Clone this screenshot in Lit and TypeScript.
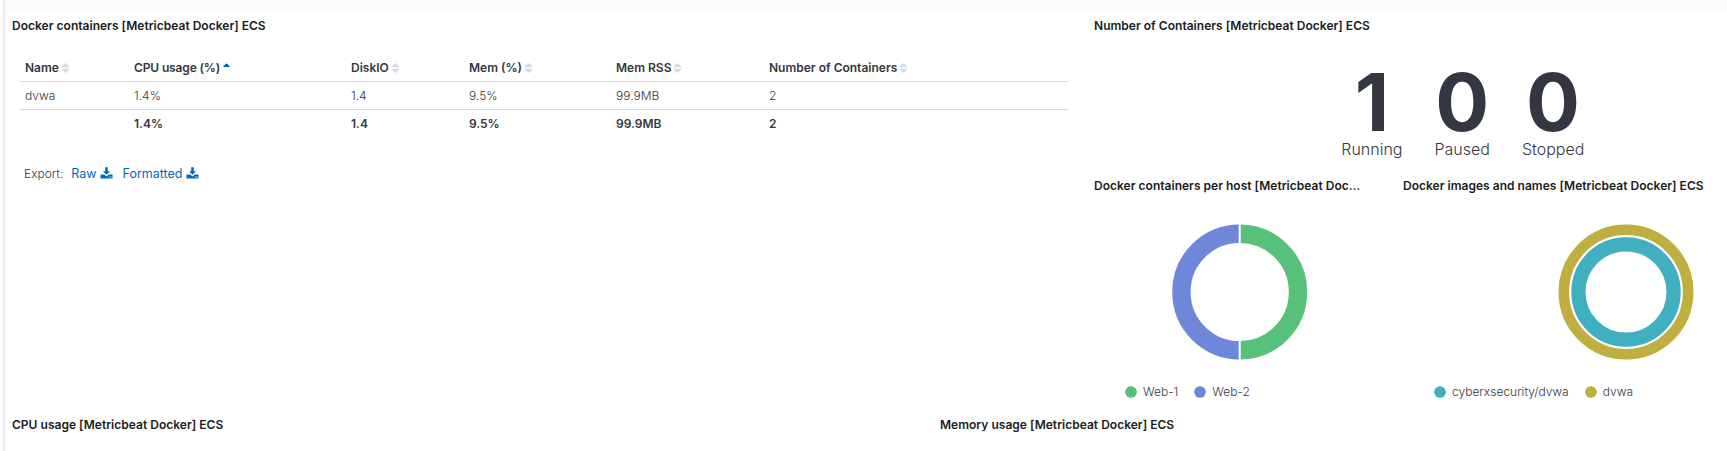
import { LitElement, html, svg, css } from "lit";
import { customElement } from "lit/decorators.js";

interface Column { label: string; value: string; total: string; sorted?: boolean }
interface Entry { label: string; color: string }

const columns: Column[] = [
  { label: "Name", value: "dvwa", total: "" },
  { label: "CPU usage (%)", value: "1.4%", total: "1.4%", sorted: true },
  { label: "DiskIO", value: "1.4", total: "1.4" },
  { label: "Mem (%)", value: "9.5%", total: "9.5%" },
  { label: "Mem RSS", value: "99.9MB", total: "99.9MB" },
  { label: "Number of Containers", value: "2", total: "2" },
];

const metrics = [
  { value: "1", label: "Running" },
  { value: "0", label: "Paused" },
  { value: "0", label: "Stopped" },
];

const hosts: Entry[] = [
  { label: "Web-1", color: "#57c17b" },
  { label: "Web-2", color: "#6f87d8" },
];

const images: Entry[] = [
  { label: "cyberxsecurity/dvwa", color: "#40afc0" },
  { label: "dvwa", color: "#bfaf40" },
];

@customElement("app-root")
export class AppRoot extends LitElement {
  static styles = css`
    :host {
      display: block;
      box-sizing: border-box;
      height: 451px;
      overflow: hidden;
      background: #fff;
      color: #343741;
      font-family: Inter, sans-serif;
      font-size: 12px;
      line-height: 18px;
    }
    .page { box-sizing: border-box; height: 451px; margin-left: 3px; border-left: 2px solid #e9ebf2; }
    .strip { height: 13px; background: #fafbfd; }
    .top { display: grid; grid-template-columns: 1082px 1fr; height: 399px; }
    .bottom { display: grid; grid-template-columns: 928px 1fr; }
    .title {
      margin: 0;
      padding: 4px 7px 0;
      font-size: 12px;
      line-height: 18px;
      font-weight: 600;
      letter-spacing: 0.02px;
      color: #1a1c21;
      white-space: nowrap;
      overflow: hidden;
      text-overflow: ellipsis;
    }
    .table { margin: 19px 0 0 15px; width: 1048px; }
    .row {
      display: grid;
      grid-template-columns: 109px 217px 118px 147px 153px 1fr;
      height: 27px;
      border-bottom: 1px solid #d3dae6;
    }
    .row.total { border: 0; }
    .cell { display: flex; align-items: center; padding-left: 5px; font-weight: 300; }
    .head .cell, .total .cell { font-weight: 600; }
    .cell.sorted { letter-spacing: -0.14px; }
    .sort { flex: none; margin-left: 2px; width: 9px; height: 10px; fill: #d3dae6; }
    .sort.on { fill: #0061b0; }
    .export { display: flex; align-items: center; margin: 28px 0 0 19px; font-weight: 300; }
    .link { display: flex; align-items: center; margin-left: 8px; color: #006bb4; font-size: 12.5px; font-weight: 400; }
    .link + .link { margin-left: 10px; }
    .link svg { margin: -3px 0 0 3px; fill: #006bb4; }
    .metrics { box-sizing: border-box; display: flex; justify-content: center; gap: 32px; height: 138px; margin-left: 100px; padding-top: 27px; }
    .metric { display: flex; flex-direction: column; align-items: center; }
    .number { font-size: 80px; line-height: 79px; font-weight: 700; }
    .caption { font-size: 16px; line-height: 24px; font-weight: 300; margin-top: -4px; }
    .pies { display: grid; grid-template-columns: 309px 1fr; }
    .pies .title { padding-right: 35px; }
    .chart { display: block; width: 136px; height: 136px; margin: 29px 0 0 85px; }
    .chart.wide { margin-left: 162px; }
    .legend { display: flex; gap: 16px; margin: 23px 0 0 38px; font-weight: 300; }
    .entry { display: flex; align-items: center; }
    .dot { width: 12px; height: 12px; border-radius: 50%; margin-right: 6px; }
  `;

  private sortIcon(sorted?: boolean) {
    return sorted
      ? html`<svg class="sort on" viewBox="0 0 9 10"><path d="M1 4Q1 3.500 4 .8Q4.500.3 5 .8 8 3.500 8 4Z"></path></svg>`
      : html`<svg class="sort" viewBox="0 0 9 10"><path d="M.6 4.200Q.6 3.500 3.700.6 4.500 0 5.300.6 8.400 3.500 8.400 4.200ZM.6 5.800H8.400Q8.400 6.500 5.300 9.400 4.500 10 3.700 9.400.6 6.500.6 5.800Z"></path></svg>`;
  }

  private link(label: string) {
    return html`<a class="link">${label}<svg width="13" height="12" viewBox="0 0 13 12">
      <path d="M5.200.3h2.600v4H10L6.500 7.800 3 4.300h2.200Z"></path>
      <path fill-rule="evenodd" d="M.5 7.500H4.300L6.500 9.500 8.700 7.500h3.800v4H.5ZM8.800 9.600h1v.9H8.800Zm1.900 0h.9v.9h-.9Z"></path>
    </svg></a>`;
  }

  private legend(entries: Entry[]) {
    return html`<div class="legend">${entries.map((e) => html`
      <span class="entry"><svg class="dot" viewBox="0 0 12 12"><circle cx="6" cy="6" r="6" fill=${e.color}></circle></svg>${e.label}</span>`)}
    </div>`;
  }

  private ring(radius: number, width: number, color: string) {
    return svg`<circle cx="68" cy="68" r=${radius} fill="none" stroke=${color} stroke-width=${width}></circle>`;
  }

  render() {
    return html`
      <div class="page">
        <div class="strip"></div>
        <div class="top">
          <section>
            <h2 class="title">Docker containers [Metricbeat Docker] ECS</h2>
            <div class="table">
              <div class="row head">${columns.map((c) => html`<div class="cell ${c.sorted ? "sorted" : ""}">${c.label}${this.sortIcon(c.sorted)}</div>`)}</div>
              <div class="row">${columns.map((c) => html`<div class="cell">${c.value}</div>`)}</div>
              <div class="row total">${columns.map((c) => html`<div class="cell">${c.total}</div>`)}</div>
            </div>
            <div class="export">Export:${this.link("Raw")}${this.link("Formatted")}</div>
          </section>
          <div>
            <section>
              <h2 class="title">Number of Containers [Metricbeat Docker] ECS</h2>
              <div class="metrics">${metrics.map((m) => html`
                <div class="metric"><span class="number">${m.value}</span><span class="caption">${m.label}</span></div>`)}
              </div>
            </section>
            <div class="pies">
              <section>
                <h2 class="title">Docker containers per host [Metricbeat Docker] ECS</h2>
                <svg class="chart" viewBox="0.3 0 136 136">
                  <path d="M68 9.700A58.300 58.300 0 0 1 68 126.300" fill="none" stroke-width="18.400" stroke=${hosts[0].color}></path>
                  <path d="M68 9.700A58.300 58.300 0 0 0 68 126.300" fill="none" stroke-width="18.400" stroke=${hosts[1].color}></path>
                  <path d="M68 0V136" stroke="#fff" stroke-width="2"></path>
                </svg>
                ${this.legend(hosts)}
              </section>
              <section>
                <h2 class="title">Docker images and names [Metricbeat Docker] ECS</h2>
                <svg class="chart wide" viewBox="0 0 136 136">
                  ${this.ring(62.2, 10.6, images[1].color)}
                  ${this.ring(47.6, 14.2, images[0].color)}
                </svg>
                ${this.legend(images)}
              </section>
            </div>
          </div>
        </div>
        <div class="bottom">
          <h2 class="title">CPU usage [Metricbeat Docker] ECS</h2>
          <h2 class="title">Memory usage [Metricbeat Docker] ECS</h2>
        </div>
      </div>
    `;
  }
}
